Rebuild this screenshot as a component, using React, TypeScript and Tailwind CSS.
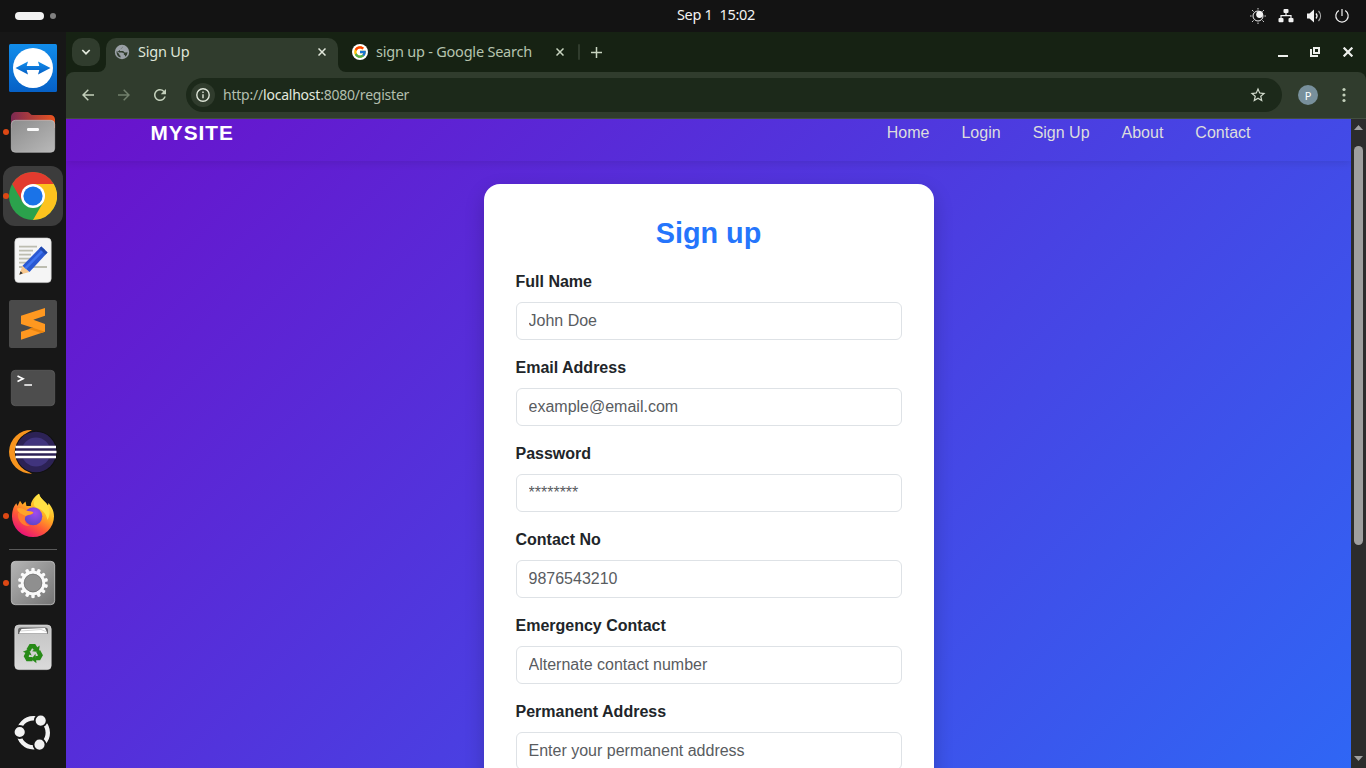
import type { ReactNode } from "react";
import { FaRecycle } from "react-icons/fa";
import { MdRefresh, MdStarOutline } from "react-icons/md";
import { FcGoogle } from "react-icons/fc";

const UI = "font-['Noto_Sans',sans-serif]";

function TopBar() {
  return (
    <header className={`grid h-8 shrink-0 grid-cols-[1fr_auto_1fr] items-center bg-[#131313] text-[#f2f2f2] ${UI}`}>
      <div className="flex items-center gap-1.5 pl-[15px]">
        <span className="h-2 w-[29px] rounded-full bg-[#f2f2f2]" />
        <span className="size-1.5 rounded-full bg-[#808080]" />
      </div>
      <div className="whitespace-pre pb-[3px] pl-[66px] text-center text-[14.5px] leading-none tracking-[-0.3px]">Sep 1  15:02</div>
      <div className="flex items-center justify-end gap-3 pr-4">
        <svg width="16" height="16" viewBox="0 0 16 16" fill="none" stroke="#f2f2f2">
          <circle cx="8" cy="8" r="5" strokeWidth="1" />
          <path d="M8 0v1.6M8 14.4V16M0 8h1.6M14.4 8H16" strokeWidth="1.6" stroke="#8c8c8c" />
          <path d="M2.2 2.2l1.3 1.3M12.500 12.500l1.3 1.3M2.2 13.8l1.3-1.3M12.500 3.500l1.3-1.3" strokeWidth="1" />
          <circle cx="9.600" cy="6.500" r="3.400" fill="#f2f2f2" stroke="none" />
        </svg>
        <svg width="16" height="16" viewBox="0 0 16 16" fill="#f2f2f2">
          <rect x="5.500" y="1" width="5" height="4" rx="1" />
          <rect x="0.500" y="10" width="5" height="4.200" rx="1" />
          <rect x="10.500" y="10" width="5" height="4.200" rx="1" />
          <path d="M8 4v3.700M3 11V7.700h10V11" fill="none" stroke="#f2f2f2" strokeWidth="1.200" />
        </svg>
        <svg width="16" height="16" viewBox="0 0 16 16" fill="none" stroke="#f2f2f2" strokeWidth="1.200">
          <path d="M1 5.500h2.500L8 1.500v13L3.500 10.500H1z" fill="#f2f2f2" stroke="none" />
          <path d="M10 5.500c1.300 1.500 1.300 3.500 0 5" />
          <path d="M12.500 3c2.700 3 2.700 7 0 10" stroke="#aaa" />
        </svg>
        <svg width="16" height="16" viewBox="0 0 16 16" fill="none" stroke="#f2f2f2" strokeWidth="1.200">
          <path d="M8 1v7M4.800 2.600a6.200 6.200 0 1 0 6.400 0" />
        </svg>
      </div>
    </header>
  );
}

function DockItem({ children, running, active }: { children: ReactNode; running?: boolean; active?: boolean }) {
  return (
    <div className="flex h-16 w-[66px] shrink-0 items-center pl-[3px]">
      <div className={`relative flex size-[60px] items-center justify-center rounded-[12px] ${active ? "bg-[#3c3c3c]" : ""}`}>
        {running && <span className="absolute left-0 top-[27px] size-[5.5px] rounded-full bg-[#dd4814]" />}
        <svg width="48" height="48" viewBox="0 0 48 48">{children}</svg>
      </div>
    </div>
  );
}

function Dock() {
  const teeth = Array.from({ length: 14 }, (_, i) => (i * 360) / 14);
  return (
    <aside className="flex w-[66px] shrink-0 flex-col bg-[#171717] pt-1">
      <DockItem>
        <defs>
          <linearGradient id="tv" x1="0" y1="0" x2="0" y2="1"><stop stopColor="#118deb" /><stop offset="1" stopColor="#0660c6" /></linearGradient>
          <linearGradient id="fb" x1="0" y1="0" x2="1" y2="0"><stop stopColor="#7b2952" /><stop offset="1" stopColor="#e95420" /></linearGradient>
          <linearGradient id="ff" x1="0" y1="0" x2="1" y2="1"><stop stopColor="#8c8c8c" /><stop offset="1" stopColor="#b9b9b9" /></linearGradient>
          <linearGradient id="lt" x1="0" y1="0" x2="0" y2="1"><stop stopColor="#c2c2c2" /><stop offset="1" stopColor="#dadada" /></linearGradient>
          <linearGradient id="st" x1="0" y1="0" x2="1" y2="1"><stop stopColor="#b5b5b5" /><stop offset="1" stopColor="#747474" /></linearGradient>
          <linearGradient id="fox" x1="0.85" y1="0.1" x2="0.3" y2="1"><stop stopColor="#fff44f" /><stop offset="0.35" stopColor="#ffb321" /><stop offset="0.65" stopColor="#ff5a36" /><stop offset="1" stopColor="#e80e7c" /></linearGradient>
          <radialGradient id="orb" cx="0.6" cy="0.3" r="0.7"><stop stopColor="#a04bf0" /><stop offset="1" stopColor="#6045c9" /></radialGradient>
        </defs>
        <rect width="48" height="48" rx="1.5" fill="url(#tv)" />
        <circle cx="24" cy="24" r="20" fill="#fff" />
        <path d="M6.500 24L19 17.500L17.700 22H30.300L29 17.500L41.500 24L29 30.500L30.300 26H17.700L19 30.500z" fill="url(#tv)" />
      </DockItem>
      <DockItem running>
        <path d="M2 9a5 5 0 0 1 5-5h11.500q1.500 0 2.500 1.500T24 7h17.500a4.500 4.500 0 0 1 4.500 4.500V20H2z" fill="url(#fb)" />
        <rect x="2.300" y="12.300" width="43.400" height="32" rx="4" fill="url(#ff)" stroke="#c7c7c7" strokeWidth="0.600" />
        <rect x="18" y="20" width="12" height="3" rx="1.200" fill="#fafafa" />
      </DockItem>
      <DockItem running active>
        <circle cx="24" cy="24" r="24" fill="#2ba24c" />
        <path d="M24 24L13.600 30L3.200 12A24 24 0 0 1 44.800 12H24z" fill="#e33b2e" />
        <path d="M24 12H44.800A24 24 0 0 1 24 48L34.400 30z" fill="#fcc31e" />
        <circle cx="24" cy="24" r="12" fill="#fff" />
        <circle cx="24" cy="24" r="9.600" fill="#1a73e8" />
      </DockItem>
      <DockItem>
        <rect x="5.800" y="2" width="36.400" height="44.600" rx="4" fill="#f5f5f5" stroke="#d0d0d0" strokeWidth="0.600" />
        <path d="M10 10.700h18M10 14.700h14M10 18.700h12M10 22.700h12M10 26.700h10M10 31h28" stroke="#bdbdb0" strokeWidth="1.800" />
        <path d="M10.300 38.700L13.500 29.700L20.500 36z" fill="#f7c78d" />
        <path d="M10.300 38.700L11.500 35.300L13.900 37.300z" fill="#333" />
        <path d="M13.500 29.700L32.300 10.500L38.500 16.500L20.500 36z" fill="#2a58d2" />
        <path d="M15.500 31.500L34.200 12.300L36 14L17.300 33.200z" fill="#3f74f0" />
        <path d="M32.300 10.500L38.500 16.500L36.500 18.600L30.300 12.600z" fill="#2148ad" />
      </DockItem>
      <DockItem>
        <rect width="48" height="48" rx="2.500" fill="#4a4a4a" />
        <path d="M12 31.700L36 24V31.700L12 39.700z" fill="#ff9820" />
        <path d="M12 15.700L36 8V15.700L24.300 19.700L36 24V31.700L12 24z" fill="#ff9820" />
        <path d="M23 27.600L36 31.700L32 33L20 29z" fill="#e8820e" />
      </DockItem>
      <DockItem>
        <rect x="2.300" y="6.300" width="43.400" height="35.400" rx="4" fill="#4d4d4d" stroke="#666" strokeWidth="0.600" />
        <path d="M8.500 12L14 14.700L8.500 17.400M15.300 21H23" fill="none" stroke="#fff" strokeWidth="1.700" />
      </DockItem>
      <DockItem>
        <path d="M23 2A22 22 0 0 0 0 23.700A22 22 0 0 0 23 45.700A24 24 0 0 1 23 2z" fill="#f7941e" />
        <circle cx="27" cy="24" r="21.200" fill="#111" />
        <circle cx="27" cy="24" r="20.200" fill="#2c2255" />
        <circle cx="27" cy="24" r="14.500" fill="#40347d" />
        <path d="M7.500 17.500h39v13H7.500z" fill="#2c2255" />
        <path d="M6.500 19H47M6 24H47.500M6.500 29H47" stroke="#fff" strokeWidth="2.300" />
      </DockItem>
      <DockItem running>
        <path d="M30 1.700C30.500 5 34 8 37 11L39 13.500L39.500 11C43 15 45 19.500 45 24.500A21 20.500 0 0 1 3 24.500C3 19 4.500 14.500 7.300 11.300L8.500 14L11 8.700L13.500 12.500L16.500 9.500L17.500 14L22 14C21 11 25 4.500 30 1.700z" fill="url(#fox)" />
        <path d="M30 1.700C30.500 5 34 8 37 11C41 16 42 22 38.500 28C37 20 32 17 27 15.500C23 14 25 5.500 30 1.700z" fill="#ffe044" />
        <circle cx="24.300" cy="24.300" r="9" fill="url(#orb)" />
        <path d="M9 21C12 21 16 19 18.500 20C20.500 21 23 19.600 24.500 20.500C23 23.500 19.500 22.300 16.500 24.500C14.500 28.500 17 32.500 21 34C13 34.500 8 28 9 21z" fill="#ff7a30" />
        <path d="M8 16.500C11 15 14.500 16.500 17 18.500C20 19.500 22 18.800 24.300 20.200C22.500 23 19 22.200 16.500 24C13.500 22 9 21.500 8 16.500z" fill="#ffa52b" />
      </DockItem>
      <div className="mx-[9px] mb-px mt-px h-px shrink-0 bg-[#5a5a5a]" />
      <DockItem running>
        <rect x="2.300" y="2.300" width="43.400" height="43.400" rx="4" fill="url(#st)" stroke="#d2d2d2" strokeWidth="0.700" />
        {teeth.map((a) => (
          <path key={a} d="M22.300 13.500V9.500Q24 8 25.700 9.500V13.500z" fill="#fafafa" transform={`rotate(${a} 24 24)`} />
        ))}
        <circle cx="24" cy="24" r="10.700" fill="#8f8f8f" stroke="#fafafa" strokeWidth="3" />
        <circle cx="24" cy="24" r="8.900" fill="none" stroke="#6d6d6d" strokeWidth="0.600" />
      </DockItem>
      <DockItem>
        <rect x="5.800" y="2" width="36.400" height="44.600" rx="4" fill="url(#lt)" stroke="#e6e6e6" strokeWidth="0.600" />
        <path d="M9 11V7.500Q9 4.500 12 4.500H36Q39 4.500 39 7.500V11z" fill="#666" />
        <path d="M10 10.500L12.500 6L36 5L38.500 10.500z" fill="#fff" />
        <path d="M12 8L32 6.500L38 9" fill="none" stroke="#aaa" strokeWidth="0.500" />
        <g fill="none" stroke="#278a17" strokeWidth="4.400">
          {[0, 120, 240].map((a) => (
            <g key={a} transform={`rotate(${a} 24 30.500)`}>
              <path d="M19.300 27.300L21.800 23.200H25L26.800 26" />
              <path d="M23 28.300L29.800 29L30.700 22.600z" fill="#278a17" stroke="none" />
            </g>
          ))}
        </g>
      </DockItem>
      <div className="mt-auto pb-[3px]">
        <DockItem>
          <circle cx="24.300" cy="23.700" r="14.500" fill="none" stroke="#f2f2f2" strokeWidth="4.400" />
          <g fill="#f2f2f2" stroke="#171717" strokeWidth="1.800">
            <circle cx="31.700" cy="11.600" r="6" />
            <circle cx="10.700" cy="23" r="6" />
            <circle cx="30.500" cy="35.600" r="6" />
          </g>
        </DockItem>
      </div>
    </aside>
  );
}

function Cross({ color, size = 8, width = 1.5 }: { color: string; size?: number; width?: number }) {
  return (
    <svg width={size} height={size} viewBox="0 0 8 8" stroke={color} strokeWidth={width}>
      <path d="M0.500 0.500L7.500 7.500M7.500 0.500L0.500 7.500" />
    </svg>
  );
}

function TabStrip() {
  return (
    <div className={`flex h-10 shrink-0 bg-[#162213] ${UI}`}>
      <div className="flex w-8 items-center pl-1.5">
        <div className="flex h-7 w-7 shrink-0 items-center justify-center rounded-[10px] bg-[#303c2d]">
          <svg width="10" height="8" viewBox="0 0 10 8" fill="none" stroke="#e2e8dc" strokeWidth="1.700"><path d="M1.300 2L5 5.700L8.700 2" /></svg>
        </div>
      </div>
      <svg className="mt-8 w-2 shrink-0" width="8" height="8" viewBox="0 0 8 8"><path d="M8 0V8H0A8 8 0 0 0 8 0z" fill="#303c2d" /></svg>
      <div className="mt-1.5 flex w-[232px] shrink-0 items-center rounded-t-[10px] bg-[#303c2d] pb-1.5 pl-2 pr-3">
        <svg width="16" height="16" viewBox="0 0 16 16">
          <circle cx="8" cy="8" r="7.200" fill="#9aa0a6" />
          <path d="M9.500 2.200Q7.800 2.500 7.800 4.200Q5.500 4.200 5.500 6.500H9.500Q10.200 7 9.800 8.500H12.500Q13.500 8 14 8.500A6 6 0 0 1 12.500 11.500Q12 10.500 10.500 10.500L8.500 8.200L8 10Q9.500 10.800 8.500 12.300L8 14Q3 13.500 2.300 9L4.500 9.500L6.500 12V9.800Q4.500 8.800 2.300 7.200" fill="none" />
          <path d="M9.300 2.500Q7.500 3 7.700 4.500Q5.500 5 5.700 7H9.300Q10 8.800 11.800 8.600L13.600 8.300Q13.300 11.300 11.300 12.700Q11.300 11 9.800 10.500V9L7.500 8.500H5.300L2.500 7.200Q2.200 12 6.500 13.600V11.800Q5 11.500 5.200 10L3.300 8.200" fill="#303c2d" />
        </svg>
        <span className="-mt-0.5 ml-2 flex-1 text-[14.5px] leading-5 tracking-[-0.2px] text-[#dfe6d9]">Sign Up</span>
        <Cross color="#e2e8dc" />
      </div>
      <svg className="mt-8 shrink-0" width="8" height="8" viewBox="0 0 8 8"><path d="M0 0V8H8A8 8 0 0 1 0 0z" fill="#303c2d" /></svg>
      <div className="flex w-[234px] items-center pl-1.5">
        <span className="flex size-4 items-center justify-center rounded-full bg-white"><FcGoogle size={14} /></span>
        <span className="-mt-0.5 ml-2 flex-1 whitespace-nowrap text-[14.5px] leading-5 tracking-[-0.22px] text-[#b5c4ae]">sign up - Google Search</span>
        <span className="mr-3.5"><Cross color="#c8d4c0" /></span>
        <span className="h-4 w-0.5 rounded bg-[#303c2d]" />
      </div>
      <div className="flex flex-1 items-center justify-between pl-[10.5px] pr-[13px]">
        <svg width="11" height="11" viewBox="0 0 11 11" stroke="#c8d4c0" strokeWidth="1.500"><path d="M5.500 0V11M0 5.500H11" /></svg>
        <div className="flex items-center">
          <svg className="mr-[22px]" width="10" height="10" viewBox="0 0 10 10"><rect y="8" width="10" height="2" fill="#eef0ec" /></svg>
          <svg className="mr-[23px]" width="10" height="10" viewBox="0 0 10 10" fill="none" stroke="#eef0ec" strokeWidth="2"><path d="M4 1H9V6H4zM1 2V9H8" /></svg>
          <Cross color="#eef0ec" size={10} width={1.8} />
        </div>
      </div>
    </div>
  );
}

function Toolbar() {
  return (
    <div className="h-[47px] shrink-0 bg-[#162213]">
      <div className={`flex h-[47px] items-center rounded-t-[8px] border-b border-[#434f41] bg-[#303c2d] ${UI}`}>
        <svg className="ml-4" width="12" height="12" viewBox="0 0 12 12" fill="none" stroke="#c3d0bb" strokeWidth="1.500"><path d="M12 6H1M6.300 0.700L1 6L6.300 11.300" /></svg>
        <svg className="ml-6" width="12" height="12" viewBox="0 0 12 12" fill="none" stroke="#72806c" strokeWidth="1.500"><path d="M0 6H11M5.700 0.700L11 6L5.700 11.300" /></svg>
        <MdRefresh className="ml-[21px]" size={18} color="#c3d0bb" />
        <div className="ml-[17px] flex h-[34px] w-[1096px] items-center rounded-full bg-[#1c291a] pl-[5px] pr-[15px]">
          <span className="flex size-6 items-center justify-center rounded-full bg-[#303c2d]">
            <svg width="14" height="14" viewBox="0 0 14 14" fill="none" stroke="#dfe6d9" strokeWidth="1.400"><circle cx="7" cy="7" r="6.200" /><path d="M7 6.300V10.300M7 3.500V5" /></svg>
          </span>
          <span className="ml-2 flex-1 text-[14px] leading-5 tracking-[-0.22px] text-[#b3bfae]">
            http://<span className="text-[#e3e9df]">localhost</span>:8080/register
          </span>
          <MdStarOutline size={18} color="#d3dccd" />
        </div>
        <span className="ml-4 flex size-5 items-center justify-center rounded-full bg-[#78909c] text-[11px] leading-none text-white">P</span>
        <svg className="ml-6" width="4" height="16" viewBox="0 0 4 16" fill="#c3d0bb"><circle cx="2" cy="2.500" r="1.600" /><circle cx="2" cy="8" r="1.600" /><circle cx="2" cy="13.500" r="1.600" /></svg>
      </div>
    </div>
  );
}

const links = ["Home", "Login", "Sign Up", "About", "Contact"];

const fields = [
  { label: "Full Name", placeholder: "John Doe" },
  { label: "Email Address", placeholder: "example@email.com" },
  { label: "Password", placeholder: "********" },
  { label: "Contact No", placeholder: "9876543210" },
  { label: "Emergency Contact", placeholder: "Alternate contact number" },
  { label: "Permanent Address", placeholder: "Enter your permanent address" },
];

function SignUpPage() {
  return (
    <main className="flex-1 overflow-hidden font-['Liberation_Sans',Arial,sans-serif]">
      <div className="-mt-5 h-[1007px] bg-[linear-gradient(135deg,#6a11cb,#2575fc)]">
        <nav className="flex h-[62px] items-center justify-between pl-[84.5px] pr-[100.5px] pt-[6px] shadow-[0_2px_8px_rgba(0,0,0,0.1)]">
          <span className="text-[20.8px] font-bold leading-none tracking-[1px] text-white">MYSITE</span>
          <ul className="flex gap-8 text-base text-[#dddddd]">
            {links.map((l) => <li key={l}>{l}</li>)}
          </ul>
        </nav>
        <form className="mx-auto mt-[23px] h-[860px] w-[450px] rounded-[16px] bg-white px-8 pt-8 shadow-[0_8px_20px_rgba(0,0,0,0.2)]">
          <h2 className="mb-[19px] text-center text-[28.8px] font-bold leading-[35px] text-[#2575fc]">Sign up</h2>
          {fields.map((f) => (
            <div key={f.label} className="mb-4">
              <label className="mb-2 block text-base font-semibold leading-6 text-[#212529]">{f.label}</label>
              <input
                placeholder={f.placeholder}
                className="block h-[38px] w-full rounded-md border border-[#dee2e6] px-3 py-1.5 text-base leading-6 placeholder:text-[#595c5f]"
              />
            </div>
          ))}
        </form>
      </div>
    </main>
  );
}

function Scrollbar() {
  return (
    <div className="flex w-[15px] shrink-0 flex-col items-center bg-[#2c2c2c]">
      <svg className="mt-1.5 shrink-0" width="9" height="5" viewBox="0 0 9 5" fill="#9f9f9f"><path d="M4.500 0L9 5H0z" /></svg>
      <div className="mt-4 h-[399px] w-[9px] shrink-0 rounded-full bg-[#9f9f9f]" />
      <svg className="mb-[7px] mt-auto shrink-0" width="9" height="5" viewBox="0 0 9 5" fill="#9f9f9f"><path d="M0 0H9L4.500 5z" /></svg>
    </div>
  );
}

export default function App() {
  return (
    <div className="flex h-[768px] w-[1366px] flex-col overflow-hidden bg-[#171717]">
      <TopBar />
      <div className="flex min-h-0 flex-1">
        <Dock />
        <div className="flex min-w-0 flex-1 flex-col">
          <TabStrip />
          <Toolbar />
          <div className="flex min-h-0 flex-1">
            <SignUpPage />
            <Scrollbar />
          </div>
        </div>
      </div>
    </div>
  );
}
